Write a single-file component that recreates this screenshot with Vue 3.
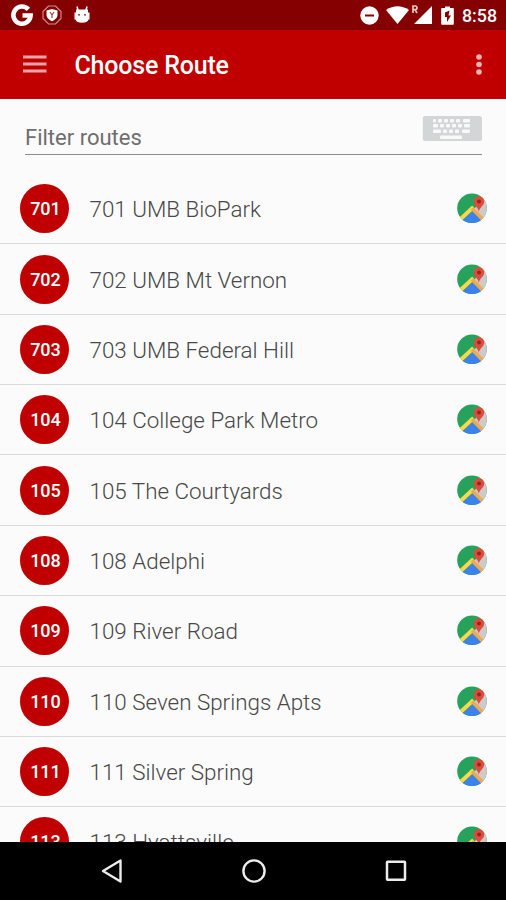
<script setup>
const routes = [
  { id: '701', name: 'UMB BioPark' },
  { id: '702', name: 'UMB Mt Vernon' },
  { id: '703', name: 'UMB Federal Hill' },
  { id: '104', name: 'College Park Metro' },
  { id: '105', name: 'The Courtyards' },
  { id: '108', name: 'Adelphi' },
  { id: '109', name: 'River Road' },
  { id: '110', name: 'Seven Springs Apts' },
  { id: '111', name: 'Silver Spring' },
  { id: '113', name: 'Hyattsville' },
]
// Keyboard keys as [x, y, width]
const keys = [
  [11, 3, 3], [16, 3, 4], [22, 3, 4], [28, 3, 4], [34, 3, 4], [41, 3, 7],
  [11, 8, 5], [18, 8, 4], [24, 8, 4], [30, 8, 4], [36, 8, 4], [42, 8, 6],
  [11, 13.5, 8], [21, 13.5, 4], [27, 13.5, 4], [33, 13.5, 4], [40, 13.5, 8],
  [18, 19.5, 22],
]
</script>

<template>
  <div class="screen">
    <header class="status">
      <div class="status-group">
        <svg class="g" width="24" height="24" viewBox="0 0 24 24">
          <path d="M18.4 6.4A8.6 8.6 0 1 0 20.6 12.500H12.5" fill="none" stroke="#fff" stroke-width="4.600" />
        </svg>
        <svg class="shield" width="20" height="20" viewBox="0 0 20 20">
          <path d="M6.5 1h7L19 6.5v7L13.500 19h-7L1 13.500v-7z" fill="none" stroke="#c98f8f" stroke-width="1.200" />
          <path d="M10 4 15.500 5.600V10c0 3-3 5.200-5.500 6.300C7.500 15.200 4.500 13 4.500 10V5.600z" fill="#fff" />
          <path d="M8 7 10 10l2-3M10 10v3" fill="none" stroke="#a04040" stroke-width="1.200" />
        </svg>
        <svg class="droid" width="16" height="20" viewBox="0 0 16 20">
          <path d="M3 1.500 4 5M13 1.500 12 5" stroke="#fff" stroke-width="1.600" />
          <path d="M2 4.500h12v3h1.500v7H14.500Q13.500 17.800 8 17.800T1.500 14.500H.5v-7H2z" fill="#fff" />
          <circle cx="5" cy="9.800" r=".9" fill="#850000" />
          <circle cx="11" cy="9.800" r=".9" fill="#850000" />
        </svg>
      </div>
      <div class="status-group">
        <svg width="19" height="19" viewBox="0 0 19 19">
          <circle cx="9.500" cy="9.500" r="9.200" fill="#fff" />
          <path d="M5 9.500h9" stroke="#850000" stroke-width="2" />
        </svg>
        <svg class="wifi" width="23" height="18" viewBox="0 0 23 18">
          <path d="M0 4Q11.500-3.500 23 4L11.500 18z" fill="#fff" />
        </svg>
        <svg class="signal" width="22" height="20" viewBox="0 0 22 20">
          <path d="M21 1v18H3z" fill="#fff" />
          <path d="M2 8V1h2.200a1.600 1.600 0 0 1 0 3.600H2M4 4.600 6 8" fill="none" stroke="#e7c6c6" stroke-width="1.700" />
        </svg>
        <svg class="battery" width="13" height="19" viewBox="0 0 13 19">
          <path d="M1 2h3V.5h5V2h3q.8 0 .8.8V18q0 .8-.8.800H1q-.8 0-.8-.8V2.800Q.2 2 1 2z" fill="#fff" />
          <path d="M8.500 4.500 4 6.500v4.500H6v5l4-6.500H7.500z" fill="#850000" />
        </svg>
        <span class="clock">8:58</span>
      </div>
    </header>

    <div class="toolbar">
      <svg class="menu" width="24" height="18" viewBox="0 0 24 18">
        <path d="M0 2h23.500M0 9h23.500M0 16h23.500" stroke="#f0a6a6" stroke-width="2.800" />
      </svg>
      <h1>Choose Route</h1>
      <svg class="more" width="6" height="21" viewBox="0 0 6 21">
        <circle cx="3" cy="3" r="2.800" fill="#f0b4b4" />
        <circle cx="3" cy="10.500" r="2.800" fill="#f0b4b4" />
        <circle cx="3" cy="18" r="2.800" fill="#f0b4b4" />
      </svg>
    </div>

    <main class="content">
      <div class="filter">
        <span class="hint">Filter routes</span>
        <svg class="keyboard" width="60" height="26" viewBox="0 0 60 26">
          <rect x=".8" width="59.200" height="25" rx="2.500" fill="#d3d6d6" />
          <rect v-for="(k, i) in keys" :key="i" :x="k[0]" :y="k[1]" :width="k[2]" height="3.400" rx="1" fill="#f8f9f9" />
        </svg>
      </div>
      <ul class="routes">
        <li v-for="r in routes" :key="r.id" class="route">
          <span class="badge">{{ r.id }}</span>
          <span class="name">{{ r.id }} {{ r.name }}</span>
          <svg class="map" width="30" height="31" viewBox="0 0 30 31">
            <defs>
              <clipPath :id="'disc' + r.id"><circle cx="15" cy="15.300" r="14.800" /></clipPath>
            </defs>
            <g :clip-path="`url(#disc${r.id})`">
              <path d="M0 0h30v31H0z" fill="#27a25c" />
              <path d="M17 16 30 2v29H25z" fill="#cdcaca" />
              <path d="M15.500 18 27 30 22 35H8L3 30z" fill="#3b82ec" />
              <path d="M2 27.500 16.500 14" stroke="#f7d94b" stroke-width="4" />
              <path d="M15 15.500 27 27.500" stroke="#f0a951" stroke-width="3.600" />
            </g>
            <path d="M21.800 19C21.500 14 16.800 13 16.800 8.500a5.200 5.200 0 0 1 10.400 0c0 4.500-4.900 5.500-5.400 10.500z" fill="#df4a3c" />
            <circle cx="22" cy="8.500" r="2" fill="#8e2720" />
          </svg>
        </li>
      </ul>
    </main>

    <nav class="navbar">
      <svg width="24" height="26" viewBox="0 0 24 26">
        <path d="M20.500 2.500v21L3 13z" fill="none" stroke="#ececec" stroke-width="2.400" stroke-linejoin="round" />
      </svg>
      <svg width="26" height="26" viewBox="0 0 26 26">
        <circle cx="13" cy="13" r="10.600" fill="none" stroke="#ececec" stroke-width="2.400" />
      </svg>
      <svg width="24" height="26" viewBox="0 0 24 26">
        <rect x="3" y="3.700" width="18" height="18" rx=".5" fill="none" stroke="#ececec" stroke-width="2.500" />
      </svg>
    </nav>
  </div>
</template>

<style>
body { margin: 0; }
</style>

<style scoped>
.screen {
  display: flex;
  flex-direction: column;
  width: 506px;
  height: 900px;
  overflow: hidden;
  background: #fbfbfb;
  font-family: Roboto, "Liberation Sans", sans-serif;
}
svg { display: block; flex: none; }
.status {
  display: flex;
  flex: none;
  justify-content: space-between;
  box-sizing: border-box;
  height: 30px;
  padding: 0 9px 0 10px;
  background: #850000;
}
.status-group { display: flex; align-items: center; }
.shield { margin-left: 8px; }
.droid { margin: 0 0 1px 12px; }
.wifi { margin-left: 7px; }
.signal { margin-left: 2px; }
.battery { margin-left: 8px; }
.clock {
  margin-left: 7.500px;
  padding-top: 2px;
  color: #fff;
  font-size: 17.800px;
  font-weight: 500;
  line-height: 20px;
}
.toolbar {
  display: flex;
  flex: none;
  align-items: center;
  box-sizing: border-box;
  height: 68.500px;
  padding: 0 24px 0 23px;
  background: #c00000;
}
.menu { margin-right: 27.500px; }
h1 {
  flex: 1;
  margin: 0;
  padding-top: 3px;
  color: #fff;
  font-size: 25px;
  font-weight: 500;
  letter-spacing: -.2px;
  line-height: 30px;
}
.content { flex: 1; min-height: 0; overflow: hidden; }
.filter {
  display: flex;
  justify-content: space-between;
  box-sizing: border-box;
  height: 56.500px;
  margin: 0 24px 19px 25px;
  border-bottom: 1.500px solid #8c8c8c;
}
.hint {
  padding-top: 25px;
  color: #6e6e6e;
  font-size: 22px;
  line-height: 28px;
}
.keyboard { margin-top: 17.500px; }
.routes { margin: 0; padding: 0; list-style: none; }
.route {
  display: flex;
  align-items: center;
  box-sizing: border-box;
  height: 70.370px;
  padding: 0 19px 0 20px;
  border-bottom: 1.500px solid #dadada;
}
.badge {
  width: 49px;
  height: 49px;
  box-sizing: border-box;
  padding-left: 2px;
  border-radius: 50%;
  background: #c00000;
  color: #fff;
  font-size: 18px;
  font-weight: 500;
  line-height: 49px;
  text-align: center;
}
.name {
  flex: 1;
  padding: 1px 0 0 20.500px;
  color: #484848;
  font-size: 22.400px;
  font-weight: 300;
  line-height: 30px;
  white-space: nowrap;
}
.navbar {
  display: flex;
  flex: none;
  align-items: center;
  justify-content: space-between;
  box-sizing: border-box;
  height: 58px;
  padding: 0 98px 0 100px;
  background: #000;
}
</style>
